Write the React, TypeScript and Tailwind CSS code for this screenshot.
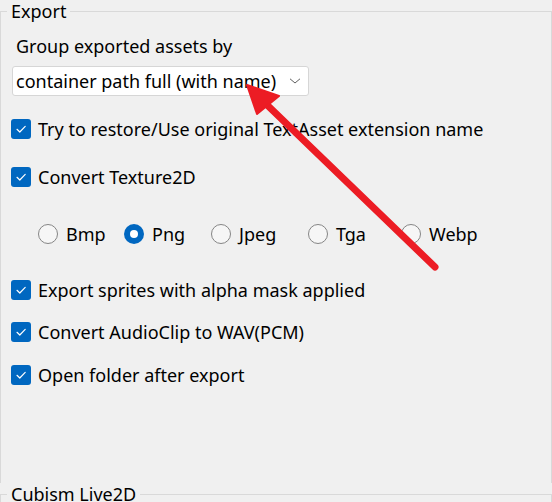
import React from "react";

const font = { fontFamily: '"Noto Sans", "Open Sans", sans-serif' };

function CheckBox({ label }: { label: string }) {
  return (
    <div className="flex items-center h-[28px] pl-[10px] gap-[7px]">
      <span className="w-[20px] h-[20px] rounded-[3px] bg-[#0067c0] flex items-center justify-center">
        <svg width="20" height="20" viewBox="0 0 20 20" fill="none">
          <path d="M6 10.3 8.8 13 14.2 7.4" stroke="#fff" strokeWidth="1.2" strokeLinecap="round" strokeLinejoin="round" />
        </svg>
      </span>
      <span>{label}</span>
    </div>
  );
}

function Radio({ label, checked, width }: { label: string; checked?: boolean; width: string }) {
  return (
    <div className={`flex items-center gap-[8px] shrink-0 ${width}`}>
      {checked ? (
        <span className="w-[20px] h-[20px] rounded-full bg-[#0067c0] flex items-center justify-center">
          <span className="w-[8px] h-[8px] rounded-full bg-white" />
        </span>
      ) : (
        <span className="w-[20px] h-[20px] rounded-full border border-[#858585] bg-[#f6f6f6]" />
      )}
      <span>{label}</span>
    </div>
  );
}

export default function App() {
  return (
    <div className="relative w-[552px] h-[502px] overflow-hidden bg-[#f0f0f0] text-[18px] text-black" style={font}>
      <fieldset className="h-[483px] border-t border-x border-b-0 border-[#d9d9d9]">
        <legend className="ml-[6px] px-[4px] leading-[22px]">Export</legend>

        <div className="mt-[12px] h-[24px] leading-[24px] pl-[15px]">Group exported assets by</div>

        <div className="mt-[8px] ml-[11px] w-[297px] h-[30px] bg-white border border-[#d6d6d6] rounded-[3px] flex items-center justify-between pl-[3px] pr-[7px]">
          <span className="leading-[24px]">container path full (with name)</span>
          <svg width="12" height="6" viewBox="0 0 12 6" fill="none">
            <path d="M1 0.8 6 5 11 0.8" stroke="#5f5f5f" strokeWidth="1" />
          </svg>
        </div>

        <div className="mt-[19px]">
          <CheckBox label="Try to restore/Use original TextAsset extension name" />
        </div>
        <div className="mt-[20px]">
          <CheckBox label="Convert Texture2D" />
        </div>

        <div className="mt-[29px] h-[28px] flex items-center pl-[37px]">
          <Radio label="Bmp" width="w-[86px]" />
          <Radio label="Png" checked width="w-[87px]" />
          <Radio label="Jpeg" width="w-[97px]" />
          <Radio label="Tga" width="w-[93px]" />
          <Radio label="Webp" width="w-[90px]" />
        </div>

        <div className="mt-[28px]">
          <CheckBox label="Export sprites with alpha mask applied" />
        </div>
        <div className="mt-[14px]">
          <CheckBox label="Convert AudioClip to WAV(PCM)" />
        </div>
        <div className="mt-[15px]">
          <CheckBox label="Open folder after export" />
        </div>
      </fieldset>

      <fieldset className="h-[60px] border-t border-x border-b-0 border-[#d9d9d9]">
        <legend className="ml-[6px] px-[4px] leading-[22px]">Cubism Live2D</legend>
      </fieldset>

      {/* red annotation arrow */}
      <svg className="absolute inset-0 pointer-events-none" width="552" height="502" viewBox="0 0 552 502">
        <line x1="435" y1="267" x2="264" y2="102" stroke="#ec1c24" strokeWidth="7" strokeLinecap="round" />
        <polygon points="247,85 257,114 279,96" fill="#ec1c24" stroke="#ec1c24" strokeWidth="2" strokeLinejoin="round" />
      </svg>
    </div>
  );
}
